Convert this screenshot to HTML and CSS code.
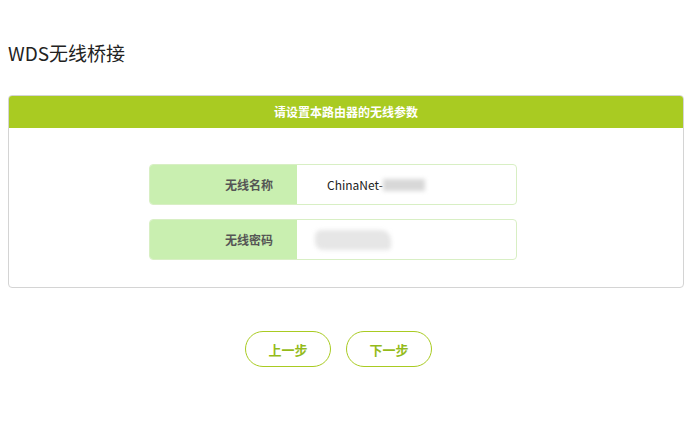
FILE: index.html
```html
<!DOCTYPE html>
<html lang="zh-CN">
<head>
    <meta charset="UTF-8">
    <title>WDS无线桥接</title>
    <link rel="stylesheet" href="styles.css">
</head>
<body>

    <h1 class="titulo">WDS无线桥接</h1>

    <div class="painel">
        <div class="painel-topo">请设置本路由器的无线参数</div>
        <div class="painel-corpo">
            <div class="linha">
                <div class="rotulo">无线名称</div>
                <div class="valor">ChinaNet-<span class="borrao borrao-nome"></span></div>
            </div>
            <div class="linha">
                <div class="rotulo">无线密码</div>
                <div class="valor"><span class="borrao borrao-senha"></span></div>
            </div>
        </div>
    </div>

    <div class="botoes">
        <button class="botao">上一步</button>
        <button class="botao">下一步</button>
    </div>

</body>
</html>
```

FILE: styles.css
```css
body {
  margin: 0;
  padding: 0 7px 0 8px;
  background-color: #fff;
  color: #333;
  font-family: "Microsoft YaHei", "Noto Sans CJK SC", sans-serif;
}

.titulo {
  margin: 0;
  padding-top: 40px;
  height: 55px;
  font-size: 19px;
  font-weight: normal;
  color: #222;
  line-height: 26px;
}

.painel {
  border: 1px solid #d4d4d4;
  border-radius: 4px;
  overflow: hidden;
}

.painel-topo {
  background-color: #a9cb22;
  color: #fff;
  font-size: 12px;
  font-weight: bold;
  text-align: center;
  height: 32px;
  line-height: 32px;
}

.painel-corpo {
  padding: 36px 0 27px 140px;
  display: flex;
  flex-direction: column;
  gap: 14px;
}

.linha {
  display: flex;
  width: 366px;
  height: 39px;
  border: 1px solid #d8efc4;
  border-radius: 4px;
  overflow: hidden;
}

.rotulo {
  width: 123px;
  padding-right: 24px;
  background-color: #c9efb0;
  color: #555;
  font-size: 12px;
  font-weight: bold;
  text-align: right;
  line-height: 39px;
}

.valor {
  flex: 1;
  padding-left: 30px;
  font-size: 12px;
  color: #222;
  line-height: 39px;
  display: flex;
  align-items: center;
}

.borrao {
  display: inline-block;
  background-color: #d8d8d8;
  filter: blur(2px);
}

.borrao-nome {
  width: 42px;
  height: 12px;
}

.borrao-senha {
  margin-left: -12px;
  width: 76px;
  height: 20px;
  background-color: #e6e6e6;
  border-radius: 6px 10px 4px 8px;
}

.botoes {
  display: flex;
  justify-content: center;
  gap: 15px;
  padding: 43px 15px 0 0;
}

.botao {
  width: 86px;
  height: 36px;
  background-color: #fff;
  border: 1px solid #a9cb22;
  border-radius: 18px;
  color: #94bb1a;
  font-size: 13px;
  font-weight: bold;
  font-family: "Microsoft YaHei", "Noto Sans CJK SC", sans-serif;
}
```
